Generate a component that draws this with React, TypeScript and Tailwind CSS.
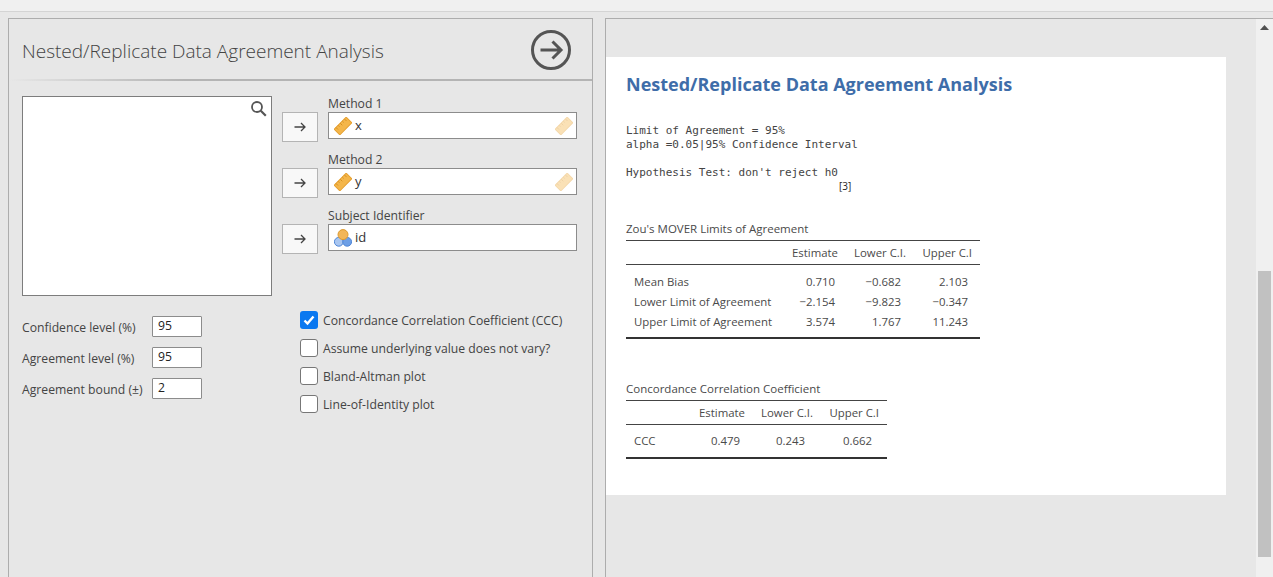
import React from 'react';

const Ruler = ({ faded = false }: { faded?: boolean }) => (
  <svg width="18" height="18" viewBox="0 0 18 18" className={faded ? 'opacity-40' : ''}>
    <g transform="rotate(-45 9 9)">
      <rect x="0.5" y="5" width="17" height="8" fill="#f4b64a" stroke="#e59e2c" />
      <path d="M3 5v3M6 5v2M9 5v3M12 5v2M15 5v3" stroke="#d68f1f" strokeWidth="0.9" fill="none" />
    </g>
  </svg>
);

const NominalIcon = () => (
  <svg width="18" height="18" viewBox="0 0 18 18">
    <circle cx="4.8" cy="12.8" r="4.4" fill="#a9c6f0" stroke="#4f86d6" />
    <circle cx="13.2" cy="12.8" r="4.4" fill="#6d9fe6" stroke="#4f86d6" />
    <circle cx="9" cy="5.6" r="5" fill="#f2b659" stroke="#dd9a30" />
  </svg>
);

const TransferButton = () => (
  <button className="w-9 h-[30px] bg-[#f8f8f8] border border-[#b4b4b4] flex items-center justify-center">
    <svg width="14" height="12" viewBox="0 0 14 12">
      <path d="M1.5 6h10.5M8 2l4 4-4 4" stroke="#444" strokeWidth="1.3" fill="none" />
    </svg>
  </button>
);

const VarField = ({ label, name, icon, faded }: { label: string; name: string; icon: React.ReactNode; faded?: boolean }) => (
  <div className="flex items-start h-14">
    <div className="pt-[16px]">
      <TransferButton />
    </div>
    <div className="ml-[10px] w-[249px]">
      <div className="h-4 leading-[16px] text-[#444]">{label}</div>
      <div className="h-[27px] bg-white border-[1.5px] border-[#8c8c8c] flex items-center pl-[5px] pr-[3px]">
        {icon}
        <span className="ml-[3px] text-[#333] text-[13px]">{name}</span>
        {faded && <span className="ml-auto"><Ruler faded /></span>}
      </div>
    </div>
  </div>
);

const NumberOption = ({ label, value }: { label: string; value: string }) => (
  <div className="flex items-center h-[21px]">
    <span className="w-[130px] pt-1 text-[#444] whitespace-nowrap">{label}</span>
    <div className="w-[50px] h-[21px] bg-white border border-[#8c8c8c] rounded-[1px] pl-[5px] leading-[17px] text-[#222]">{value}</div>
  </div>
);

const CheckOption = ({ label, checked }: { label: string; checked?: boolean }) => (
  <div className="flex items-center h-[18px]">
    {checked ? (
      <span className="w-[18px] h-[18px] rounded-[3px] bg-[#0a78f0] flex items-center justify-center">
        <svg width="14" height="14" viewBox="0 0 14 14">
          <path d="M2.5 7.5l3 3 6-7" stroke="#fff" strokeWidth="2.4" fill="none" />
        </svg>
      </span>
    ) : (
      <span className="w-[18px] h-[18px] rounded-[3px] bg-white border border-[#777]"></span>
    )}
    <span className="ml-[5px] pt-[2px] text-[#444] whitespace-nowrap">{label}</span>
  </div>
);

const Row = ({ cols, cells, className }: { cols: string; cells: string[]; className: string }) => (
  <div className={`grid ${cols} ${className}`}>
    {cells.map((c, i) => (
      <div key={i} className={i === 0 ? 'pl-2 whitespace-nowrap' : 'text-right whitespace-nowrap'}>{c}</div>
    ))}
  </div>
);

const loaCols = 'grid-cols-[147px_62px_66px_67px]';
const cccCols = 'grid-cols-[54px_60px_65px_67px]';

const App = () => {
  return (
    <div className="h-[577px] w-[1273px] overflow-hidden bg-[#e7e7e7] text-[12.2px] font-['Open_Sans','Noto_Sans',sans-serif]">
      <div className="h-3 bg-[#f0f0f0] border-b border-[#d4d4d4]"></div>
      <div className="h-[6px]"></div>
      <div className="flex h-[559px]">
        {/* Left: options panel */}
        <div className="ml-2 w-[585px] border-x border-t border-[#adadad] shrink-0">
          <div className="h-[60px] flex items-center justify-between pl-[13px] pr-[20px]">
            <h1 className="text-[19px] text-[#444] font-light mt-[4px]">Nested/Replicate Data Agreement Analysis</h1>
            <svg width="42" height="42" viewBox="0 0 42 42" className="mt-[2px]">
              <circle cx="21" cy="21" r="18.5" stroke="#555" strokeWidth="3" fill="none" />
              <path d="M10.5 21h20M22.5 12.5l8.5 8.5-8.5 8.5" stroke="#555" strokeWidth="3" fill="none" />
            </svg>
          </div>
          <div className="h-[2px] bg-gradient-to-r from-[#e7e7e7] to-[#b4b4b4] to-30%"></div>

          <div className="flex pl-[13px] pt-[15px]">
            <div className="w-[250px] h-[200px] bg-white border border-[#7d7d7d] flex justify-end pt-[3px] pr-[4px]">
              <svg width="17" height="17" viewBox="0 0 17 17">
                <circle cx="7" cy="7" r="5" stroke="#555" strokeWidth="1.8" fill="none" />
                <path d="M10.8 10.8l5 5" stroke="#555" strokeWidth="2.2" fill="none" />
              </svg>
            </div>
            <div className="ml-[10px]">
              <VarField label="Method 1" name="x" icon={<Ruler />} faded />
              <VarField label="Method 2" name="y" icon={<Ruler />} faded />
              <VarField label="Subject Identifier" name="id" icon={<NominalIcon />} />
            </div>
          </div>

          <div className="flex pl-[13px] pt-[15px]">
            <div className="w-[278px] pt-[5px] flex flex-col gap-[10px]">
              <NumberOption label="Confidence level (%)" value="95" />
              <NumberOption label="Agreement level (%)" value="95" />
              <NumberOption label="Agreement bound (±)" value="2" />
            </div>
            <div className="flex flex-col gap-[10px]">
              <CheckOption label="Concordance Correlation Coefficient (CCC)" checked />
              <CheckOption label="Assume underlying value does not vary?" />
              <CheckOption label="Bland-Altman plot" />
              <CheckOption label="Line-of-Identity plot" />
            </div>
          </div>
        </div>

        {/* Right: results and scrollbar */}
        <div className="ml-3 flex-1 flex border-t border-[#adadad]">
          <div className="flex-1 border-l border-[#adadad] pt-[38px]">
            <div className="w-[620px] h-[438px] bg-white pl-5 pt-[14px] text-[#4a4a4a]">
              <h2 className="text-[18px] leading-[26px] font-bold text-[#3e6da9]">Nested/Replicate Data Agreement Analysis</h2>
              <pre className="mt-[27px] font-['DejaVu_Sans_Mono',monospace] text-[11px] leading-[14px] text-[#444]">
                {'Limit of Agreement = 95%\nalpha =0.05|95% Confidence Interval\n\nHypothesis Test: don\'t reject h0'}
              </pre>
              <div className="ml-[213px] text-[10px] leading-[13px] text-[#222]">[3]</div>

              <div className="mt-[27px] w-[354px]">
                <div className="h-5 leading-[17px] text-[11.5px]">Zou's MOVER Limits of Agreement</div>
                <Row cols="grid-cols-[147px_65px_68px_66px]" cells={['', 'Estimate', 'Lower C.I.', 'Upper C.I']} className="text-[11.4px] h-[25px] leading-[24px] border-t border-b border-[#444]" />
                <div className="pt-[7px] pb-[5px] border-b-2 border-[#333] text-[11.4px]">
                  <Row cols={loaCols} cells={['Mean Bias', '0.710', '−0.682', '2.103']} className="h-5 leading-5" />
                  <Row cols={loaCols} cells={['Lower Limit of Agreement', '−2.154', '−9.823', '−0.347']} className="h-5 leading-5" />
                  <Row cols={loaCols} cells={['Upper Limit of Agreement', '3.574', '1.767', '11.243']} className="h-5 leading-5" />
                </div>
              </div>

              <div className="mt-[41px] w-[261px]">
                <div className="h-5 leading-[17px] text-[11.5px]">Concordance Correlation Coefficient</div>
                <Row cols="grid-cols-[54px_65px_68px_66px]" cells={['', 'Estimate', 'Lower C.I.', 'Upper C.I']} className="text-[11.4px] h-[25px] leading-[24px] border-t border-b border-[#444]" />
                <div className="pt-[6px] pb-[6px] border-b-2 border-[#333] text-[11.4px]">
                  <Row cols={cccCols} cells={['CCC', '0.479', '0.243', '0.662']} className="h-5 leading-5" />
                </div>
              </div>
            </div>
          </div>

          <div className="w-[17px] bg-[#f0f0f0] flex flex-col items-center pt-[6px] shrink-0">
            <svg width="9" height="5" viewBox="0 0 9 5">
              <path d="M4.5 0L9 5H0z" fill="#505050" />
            </svg>
            <div className="w-[13px] h-[286px] bg-[#c1c1c1] mt-[241px]"></div>
          </div>
        </div>
      </div>
    </div>
  );
};

export default App;
